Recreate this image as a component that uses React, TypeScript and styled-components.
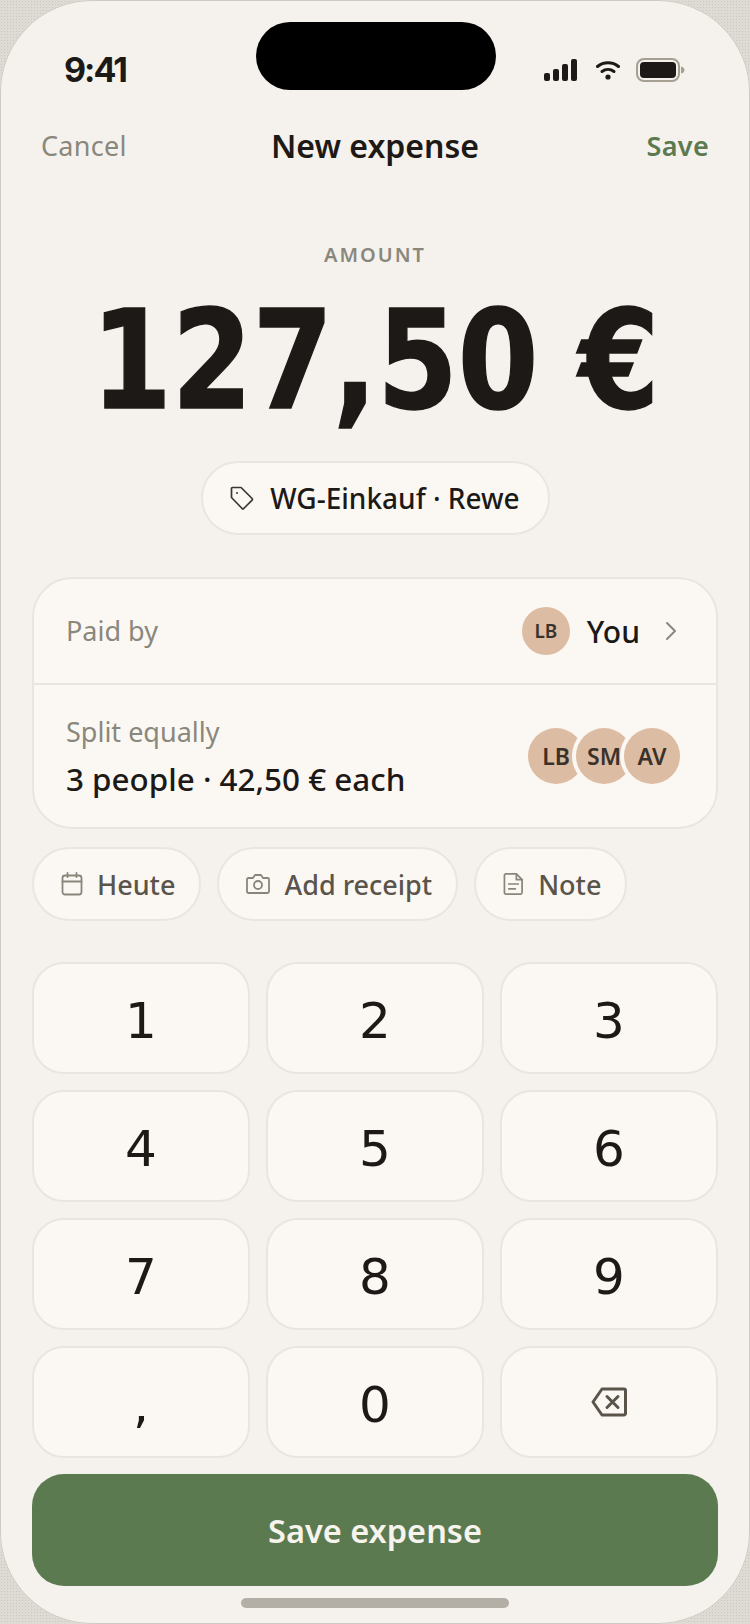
import React from "react";
import styled, { createGlobalStyle } from "styled-components";

const Global = createGlobalStyle`
  html, body { margin: 0; padding: 0; background: #dcd8d2; }
  #root { width: 750px; height: 1624px; }
  * { box-sizing: border-box; }
`;
const SANS = `"Noto Sans", Roboto, sans-serif`;
const SLAB_DIGITS = `"DejaVu Sans", "Noto Sans", sans-serif`;

const Backdrop = styled.div`
  width: 750px; height: 1624px; overflow: hidden;
  background-color: #dedad4;
  background-image: radial-gradient(circle, #cbc7bf 0.6px, transparent 0.8px);
  background-size: 3px 3px;
  font-family: ${SANS};
`;
const Phone = styled.main`
  position: relative; width: 750px; height: 1624px; border-radius: 92px;
  background: #f5f2ed; box-shadow: inset 0 0 0 1px #cfcbc3;
  display: flex; flex-direction: column; padding: 0 32px;
`;
const Island = styled.div`
  position: absolute; left: 256px; top: 22px; width: 240px; height: 68px;
  border-radius: 34px; background: #000;
`;
const StatusBar = styled.header`
  height: 103px; padding: 50px 33px 0 32px;
  display: flex; justify-content: space-between; align-items: flex-start;
`;
const Time = styled.span`
  font: 700 34px/40px Inter, sans-serif; color: #1c1916; letter-spacing: -2px;
`;
const StatusIcons = styled.div`
  display: flex; align-items: center; gap: 16px; height: 40px;
`;
const Nav = styled.nav`
  height: 88px; display: grid; grid-template-columns: 1fr auto 1fr; align-items: center;
  padding: 0 9px 3px;
`;
const NavAction = styled.span<{ $save?: boolean }>`
  font-size: 27px; letter-spacing: 0.3px; font-weight: ${p => (p.$save ? 600 : 400)};
  color: ${p => (p.$save ? "#5b7a50" : "#8a877c")};
  text-align: ${p => (p.$save ? "right" : "left")};
`;
const NavTitle = styled.h1`
  margin: 0; font-size: 32px; font-weight: 600; color: #1c1916;
`;
const AmountBlock = styled.section`
  display: flex; flex-direction: column; align-items: center; padding-top: 50px;
`;
const AmountLabel = styled.div`
  font-size: 20px; line-height: 28px; font-weight: 600; letter-spacing: 2px; color: #8a877c;
`;
const AmountValue = styled.div`
  font-family: ${SLAB_DIGITS};
  font-size: 138px; line-height: 168px; font-weight: 700; color: #1c1916;
  -webkit-text-stroke: 1.5px #1c1916;
  margin-top: 8px; white-space: nowrap; transform: scaleX(0.84);
`;
const TagPill = styled.div`
  margin-top: 16px; height: 74px; width: 349px; border-radius: 37px; border: 2px solid #e9e6e0;
  background: #fbf8f4; display: flex; align-items: center; justify-content: center; gap: 16px;
  font-size: 28px; font-weight: 500; color: #1c1916;
`;
const Card = styled.section`
  margin-top: 42px; border: 2px solid #e9e6e0; border-radius: 40px; background: #fbf8f4;
  height: 252px; display: flex; flex-direction: column;
`;
const PaidRow = styled.div`
  height: 106px; padding: 0 38px 0 32px; display: flex; align-items: center;
  border-bottom: 2px solid #e9e6e0;
`;
const Muted = styled.span`
  font-size: 27px; color: #8a877c; line-height: 34px;
`;
const Spacer = styled.div`flex: 1;`;
const Avatar = styled.div<{ $size: number; $ring?: boolean; $fs: number }>`
  width: ${p => p.$size}px; height: ${p => p.$size}px; border-radius: 50%;
  background: #dcbca2; color: #3a322a; font-size: ${p => p.$fs}px; font-weight: 600;
  display: flex; align-items: center; justify-content: center; flex: none;
  ${p => p.$ring ? "box-shadow: 0 0 0 4px #fbf8f4; margin-left: -8px; position: relative;" : ""}
  &:first-child { margin-left: 0; }
`;
const YouLabel = styled.span`
  font-size: 30px; font-weight: 500; color: #1c1916; margin: 0 24px 0 17px;
`;
const SplitRow = styled.div`
  flex: 1; padding: 0 36px 0 32px; display: flex; align-items: center; justify-content: space-between;
`;
const SplitText = styled.div`display: flex; flex-direction: column; gap: 11px;`;
const SplitValue = styled.span`
  font-size: 31.4px; line-height: 38px; font-weight: 500; color: #1c1916;
`;
const AvatarStack = styled.div`display: flex;`;
const Chips = styled.div`display: flex; gap: 16px; margin-top: 18px;`;
const Chip = styled.div`
  height: 74px; border-radius: 37px; border: 2px solid #e9e6e0; background: #fbf8f4;
  padding: 0 24px 0 27px; display: flex; align-items: center; gap: 14px;
  font-size: 27px; font-weight: 500; color: #5a544b;
`;
const Keypad = styled.section`
  margin-top: 41px; display: grid; grid-template-columns: repeat(3, 1fr);
  grid-auto-rows: 112px; gap: 16px;
`;
const Key = styled.button`
  border: 2px solid #e9e6e0; border-radius: 32px; background: #fbf8f4; padding: 0;
  font-family: ${SLAB_DIGITS}; font-size: 50px; color: #1c1916;
  display: flex; align-items: center; justify-content: center;
`;
const KeyLabel = styled.span`
  padding-top: 5px;
`;
const SaveButton = styled.button`
  margin-top: 16px; height: 112px; border: 0; border-radius: 32px; background: #5b7a50;
  font-family: ${SANS}; font-size: 32.5px; font-weight: 600; color: #f7f4ee;
`;
const HomeIndicator = styled.div`
  width: 268px; height: 10px; border-radius: 5px; background: #b3afa7; margin: 12px auto 0;
`;

const Signal = () => (
  <svg width="33" height="22" viewBox="0 0 33 22" fill="#1c1916" aria-hidden>
    <rect x="0" y="14" width="6" height="8" rx="2" />
    <rect x="9" y="10" width="6" height="12" rx="2" />
    <rect x="18" y="5" width="6" height="17" rx="2" />
    <rect x="27" y="0" width="6" height="22" rx="2" />
  </svg>
);
const Wifi = () => (
  <svg width="27" height="20" viewBox="-3 0 27 20" fill="none" stroke="#1c1916" strokeWidth="3" strokeLinecap="round" aria-hidden>
    <path d="M1.500 6.500C7.500 1.500 16.500 1.500 22.500 6.500" />
    <path d="M6 11.500C9.500 8.800 14.500 8.800 18 11.500" />
    <circle cx="12" cy="17" r="2.600" fill="#1c1916" stroke="none" />
  </svg>
);
const Battery = () => (
  <svg width="49" height="24" viewBox="0 0 49 24" aria-hidden>
    <rect x="1" y="1" width="42" height="22" rx="7" fill="none" stroke="#a5a092" strokeWidth="2" />
    <rect x="4" y="4" width="36" height="16" rx="4" fill="#1c1916" />
    <path d="M45 8.500c2.500.5 3.500 2 3.500 3.500s-1 3-3.500 3.500z" fill="#a5a092" />
  </svg>
);
const TagIcon = () => (
  <svg width="24" height="24" viewBox="0 0 24 24" fill="none" stroke="#3a3630" strokeWidth="1.7" strokeLinejoin="round" aria-hidden>
    <path d="M1.500 2.500a1 1 0 0 1 1-1h8.600l11 11a1.200 1.200 0 0 1 0 1.600l-8.400 8.400a1.200 1.200 0 0 1-1.600 0l-10.600-11z" />
    <circle cx="7" cy="7" r="1" fill="#3a3630" stroke="none" />
  </svg>
);
const Chevron = () => (
  <svg width="14" height="20" viewBox="0 0 14 20" fill="none" stroke="#8a877c" strokeWidth="2" strokeLinecap="round" strokeLinejoin="round" aria-hidden>
    <path d="M3 2l8 8-8 8" />
  </svg>
);
const CalendarIcon = () => (
  <svg width="22" height="24" viewBox="0 0 22 24" fill="none" stroke="#8a857a" strokeWidth="1.8" strokeLinecap="round" aria-hidden>
    <rect x="1.500" y="3.500" width="19" height="19" rx="2.500" />
    <path d="M1.500 9.500h19M6.500 1v4M15.500 1v4" />
  </svg>
);
const CameraIcon = () => (
  <svg width="24" height="22" viewBox="0 0 24 22" fill="none" stroke="#8a857a" strokeWidth="1.8" strokeLinejoin="round" aria-hidden>
    <path d="M2.500 5H7l2-3h6l2 3h4.500a1.500 1.500 0 0 1 1.500 1.500v12a1.500 1.500 0 0 1-1.500 1.500h-19A1.500 1.500 0 0 1 1 18.500v-12A1.500 1.500 0 0 1 2.500 5z" />
    <circle cx="12" cy="12" r="4" />
  </svg>
);
const NoteIcon = () => (
  <svg width="21" height="24" viewBox="0 0 22 24" fill="none" stroke="#8a857a" strokeWidth="1.8" strokeLinejoin="round" strokeLinecap="round" aria-hidden>
    <path d="M3 1.500h11l6 6V21a1.500 1.500 0 0 1-1.500 1.500h-15.500A1.500 1.500 0 0 1 1.500 21V3A1.500 1.500 0 0 1 3 1.500z" />
    <path d="M14 1.500v6h6M6 12h10M6 17h7" />
  </svg>
);
const BackspaceIcon = () => (
  <svg width="36" height="30" viewBox="0 0 36 30" fill="none" stroke="#5a544b" strokeWidth="3" strokeLinejoin="round" strokeLinecap="round" aria-hidden>
    <path d="M11 2h22a1.500 1.500 0 0 1 1.500 1.500v23A1.500 1.500 0 0 1 33 28H11L2 15z" />
    <path d="M16 9.500l11 11M27 9.500l-11 11" />
  </svg>
);

const keys = ["1", "2", "3", "4", "5", "6", "7", "8", "9", ",", "0"];

export default function App() {
  return (
    <>
      <Global />
      <Backdrop>
        <Phone>
          <Island />
          <StatusBar>
            <Time>9:41</Time>
            <StatusIcons><Signal /><Wifi /><Battery /></StatusIcons>
          </StatusBar>
          <Nav>
            <NavAction>Cancel</NavAction>
            <NavTitle>New expense</NavTitle>
            <NavAction $save>Save</NavAction>
          </Nav>
          <AmountBlock>
            <AmountLabel>AMOUNT</AmountLabel>
            <AmountValue>127,50 €</AmountValue>
            <TagPill><TagIcon />WG-Einkauf · Rewe</TagPill>
          </AmountBlock>
          <Card>
            <PaidRow>
              <Muted>Paid by</Muted>
              <Spacer />
              <Avatar $size={48} $fs={19}>LB</Avatar>
              <YouLabel>You</YouLabel>
              <Chevron />
            </PaidRow>
            <SplitRow>
              <SplitText>
                <Muted>Split equally</Muted>
                <SplitValue>3 people · 42,50 € each</SplitValue>
              </SplitText>
              <AvatarStack>
                <Avatar $size={56} $fs={23} $ring>LB</Avatar>
                <Avatar $size={56} $fs={23} $ring>SM</Avatar>
                <Avatar $size={56} $fs={23} $ring>AV</Avatar>
              </AvatarStack>
            </SplitRow>
          </Card>
          <Chips>
            <Chip><CalendarIcon />Heute</Chip>
            <Chip><CameraIcon />Add receipt</Chip>
            <Chip><NoteIcon />Note</Chip>
          </Chips>
          <Keypad>
            {keys.map(k => <Key key={k}><KeyLabel>{k}</KeyLabel></Key>)}
            <Key aria-label="Delete"><BackspaceIcon /></Key>
          </Keypad>
          <SaveButton>Save expense</SaveButton>
          <HomeIndicator />
        </Phone>
      </Backdrop>
    </>
  );
}
